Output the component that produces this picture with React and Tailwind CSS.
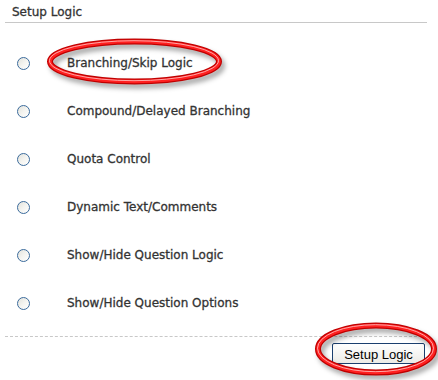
import React from "react";

const items = [
  "Branching/Skip Logic",
  "Compound/Delayed Branching",
  "Quota Control",
  "Dynamic Text/Comments",
  "Show/Hide Question Logic",
  "Show/Hide Question Options",
];

function Radio() {
  return (
    <span className="block w-[13px] h-[13px] rounded-full border border-[#3b6b9c] bg-gradient-to-br from-[#e2e2dc] via-[#f4f4f0] to-[#ffffff] shrink-0" />
  );
}

function Ring({ cx, cy, rx, ry, id }) {
  return (
    <g>
      <ellipse cx={cx + 3} cy={cy + 4} rx={rx} ry={ry} fill="none" stroke="#000" strokeOpacity="0.35" strokeWidth="6" filter={`url(#blur${id})`} />
      <ellipse cx={cx} cy={cy} rx={rx} ry={ry} fill="none" stroke="#c00000" strokeWidth="6" />
      <ellipse cx={cx} cy={cy} rx={rx} ry={ry} fill="none" stroke="#ff2020" strokeWidth="3.5" />
      <ellipse cx={cx - 0.5} cy={cy - 0.8} rx={rx} ry={ry} fill="none" stroke="#ffc0c0" strokeWidth="1" strokeOpacity="0.85" />
    </g>
  );
}

export default function App() {
  return (
    <div
      className="relative w-[438px] h-[380px] bg-white text-[#333333] text-[12px] overflow-hidden [-webkit-text-stroke:0.3px_#333333]"
      style={{ fontFamily: '"DejaVu Sans", Verdana, sans-serif' }}
    >
      <div className="ml-[5px] w-[422px] h-[23px] border-b border-[#c8c8c8] pl-[7px] pt-[5px] leading-[14px]">
        Setup Logic
      </div>
      <div className="mt-[16px] flex flex-col">
        {items.map((t) => (
          <div key={t} className="h-[48px] flex items-center">
            <div className="w-[67px] flex pl-[17px]">
              <Radio />
            </div>
            <span className="leading-[14px]">{t}</span>
          </div>
        ))}
      </div>
      <div className="mt-[9px] ml-[5px] w-[422px] border-t border-dashed border-[#c8c8c8]" />
      <div className="flex justify-end pr-[13px] pt-[6px]">
        <button
          className="w-[93px] h-[21px] border border-[#1b3f6e] rounded-[2px] bg-gradient-to-b from-[#ffffff] to-[#ecebe6] text-[13px] text-black leading-[19px] pt-[1px] [-webkit-text-stroke:0px]"
          style={{ fontFamily: '"Liberation Sans", Arial, sans-serif' }}
        >
          Setup Logic
        </button>
      </div>
      <svg className="absolute left-0 top-0 pointer-events-none" width="438" height="380">
        <defs>
          <filter id="blur1" x="-20%" y="-50%" width="140%" height="200%">
            <feGaussianBlur stdDeviation="2.5" />
          </filter>
          <filter id="blur2" x="-20%" y="-50%" width="140%" height="200%">
            <feGaussianBlur stdDeviation="2.5" />
          </filter>
        </defs>
        <Ring id="1" cx={134.5} cy={61.5} rx={84.5} ry={20} />
        <Ring id="2" cx={376} cy={349} rx={58} ry={23.5} />
      </svg>
    </div>
  );
}
